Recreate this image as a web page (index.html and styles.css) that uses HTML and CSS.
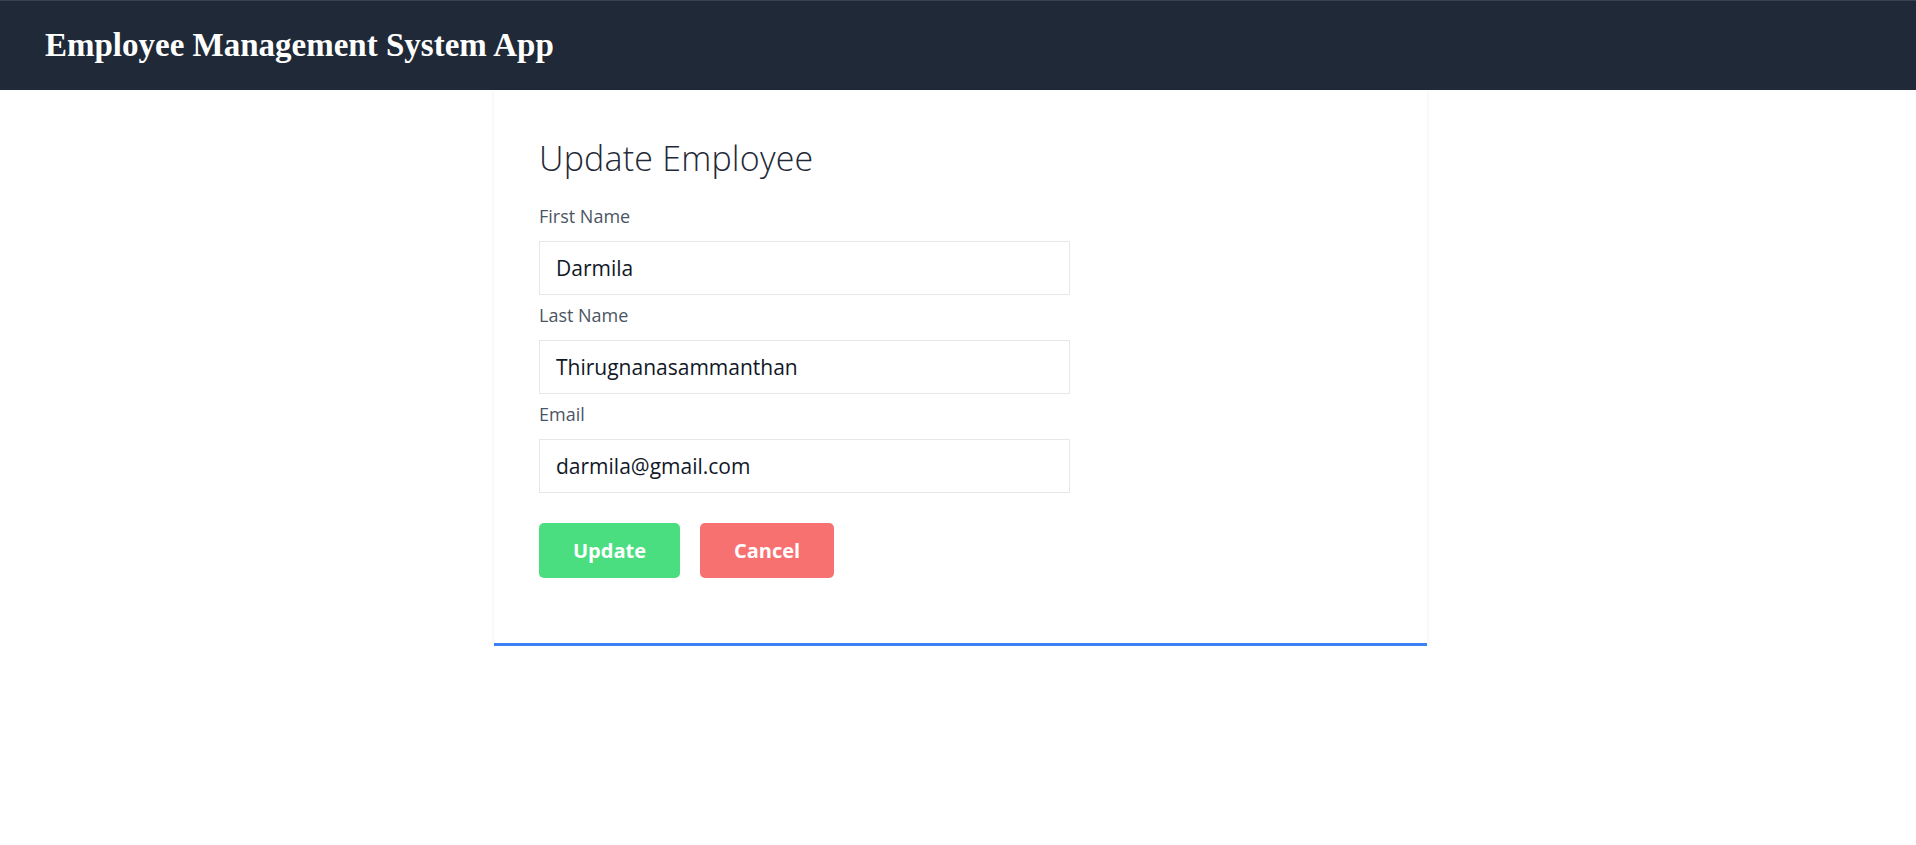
FILE: index.html
```html
<!DOCTYPE html>
<html lang="en">
<head>
<meta charset="utf-8">
<title>Employee Management System App</title>
<link rel="stylesheet" href="styles.css">
</head>
<body>
<header class="topbar">
  <h1 class="brand">Employee Management System App</h1>
</header>
<main class="page">
  <section class="card">
    <h2 class="card-title">Update Employee</h2>
    <form class="form">
      <div class="field">
        <label class="label" for="fn">First Name</label>
        <input class="input" id="fn" type="text" value="Darmila">
      </div>
      <div class="field">
        <label class="label" for="ln">Last Name</label>
        <input class="input" id="ln" type="text" value="Thirugnanasammanthan">
      </div>
      <div class="field">
        <label class="label" for="em">Email</label>
        <input class="input" id="em" type="email" value="darmila@gmail.com">
      </div>
      <div class="actions">
        <button type="button" class="btn btn-update">Update</button>
        <button type="button" class="btn btn-cancel">Cancel</button>
      </div>
    </form>
  </section>
</main>
</body>
</html>
```
FILE: styles.css
```css
* { box-sizing: border-box; }
html, body { margin: 0; padding: 0; background: #ffffff; }
body { font-family: "Open Sans", "Noto Sans", sans-serif; }

.topbar {
  height: 90px;
  background: #1f2937;
  border-top: 1px solid #394150;
  display: flex;
  align-items: center;
  padding-left: 45px;
}
.brand {
  margin: 0;
  font-family: "Liberation Serif", serif;
  font-weight: bold;
  font-size: 33px;
  color: #ffffff;
  line-height: 1;
}

.page { display: flex; justify-content: center; padding-left: 5px; }
.card {
  width: 933px;
  padding: 48px 45px 65px;
  background: #fff;
  box-shadow: 0 1px 4px rgba(0,0,0,0.08);
  border-bottom: 3px solid #3b82f6;
}
.card-title {
  margin: 0 0 26px;
  font-size: 34px;
  font-weight: 300;
  line-height: 40px;
  color: #1f2937;
  letter-spacing: 0.2px;
}
.form { display: flex; flex-direction: column; }
.field { display: flex; flex-direction: column; }
.label {
  font-size: 18px;
  line-height: 25px;
  color: #4b5563;
  margin-bottom: 12px;
}
.input {
  width: 531px;
  height: 54px;
  border: 1.5px solid #e5e7eb;
  padding: 0 16px;
  font-family: "Open Sans", "Noto Sans", sans-serif;
  font-size: 21px;
  color: #111827;
  outline: none;
  margin-bottom: 8px;
}
.actions {
  display: flex;
  gap: 20px;
  margin-top: 22px;
}
.btn {
  height: 55px;
  padding: 0 34px;
  border: none;
  border-radius: 5px;
  color: #fff;
  font-family: "Open Sans", "Noto Sans", sans-serif;
  font-weight: 700;
  font-size: 20px;
}
.btn-update { background: #4ade80; }
.btn-cancel { background: #f87171; }
```
